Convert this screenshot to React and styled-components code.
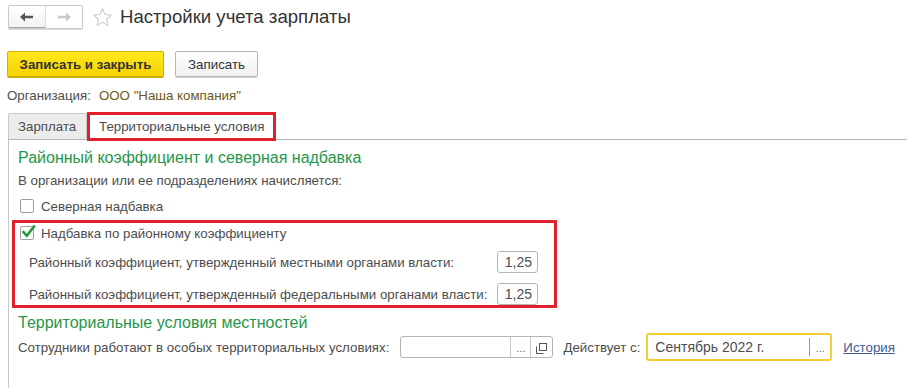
import React from 'react';
import styled, { createGlobalStyle } from 'styled-components';

const GlobalStyle = createGlobalStyle`
  html, body {
    margin: 0;
    padding: 0;
    background: #fff;
  }
  body {
    font-family: 'Liberation Sans', Arial, sans-serif;
    font-size: 13.3px;
    color: #4d4d4d;
  }
`;

const Page = styled.div`
  width: 907px;
  height: 388px;
  overflow: hidden;
`;

const Header = styled.div`
  display: flex;
  align-items: center;
  height: 24px;
  padding: 5px 0 0 8px;
`;

const NavGroup = styled.div`
  display: flex;
  height: 24px;
  border: 1px solid #c9c9c9;
  border-radius: 2px;
  box-sizing: border-box;
  box-shadow: 0 1px 0 #dcdcdc;
  background: #fff;
`;

const NavButton = styled.div`
  width: 36px;
  display: flex;
  align-items: center;
  justify-content: center;
  background: ${(p) => (p.$active ? 'linear-gradient(#fff, #f2f2f2)' : '#fff')};
  border-left: ${(p) => (p.$divider ? '1px solid #dedede' : 'none')};
  box-shadow: ${(p) => (p.$active ? 'inset 0 -1px 0 #a8a8a8' : 'none')};
`;

const Star = styled.svg`
  margin-left: 9px;
`;

const Title = styled.h1`
  margin: 0 0 0 7px;
  font-size: 18.6px;
  font-weight: normal;
  color: #333;
  line-height: 24px;
`;

const Toolbar = styled.div`
  display: flex;
  gap: 11px;
  padding: 22px 0 0 7px;
`;

const Button = styled.button`
  height: 26px;
  box-sizing: border-box;
  padding: 0;
  font-family: inherit;
  font-size: 13.3px;
  font-weight: ${(p) => (p.$primary ? 'bold' : 'normal')};
  color: #333;
  border-radius: 2px;
  border: 1px solid ${(p) => (p.$primary ? '#d1b000' : '#b8b8b8')};
  background: ${(p) =>
    p.$primary ? 'linear-gradient(#ffe81f, #f6d200)' : 'linear-gradient(#fff, #f1f1f1)'};
  box-shadow: 0 1px 0 ${(p) => (p.$primary ? '#c9a900' : '#cfcfcf')};
  width: ${(p) => p.$w}px;
`;

const OrgRow = styled.div`
  display: flex;
  gap: 8px;
  padding: 11px 0 0 7px;
  line-height: 16px;
`;

const OrgValue = styled.span`
  color: #6e5a16;
`;

const Tabs = styled.div`
  display: flex;
  margin: 9px 0 0 8px;
  height: 26px;
`;

const Tab = styled.div`
  position: relative;
  box-sizing: border-box;
  width: ${(p) => p.$w}px;
  padding-left: ${(p) => p.$pad}px;
  display: flex;
  align-items: center;
  background: ${(p) => (p.$active ? '#fff' : '#ececec')};
  border: 1px solid #c8c8c8;
  border-bottom: none;
  border-radius: 2px 2px 0 0;
  color: #4d4d4d;
`;

const Highlight = styled.div`
  position: absolute;
  border: 3px solid #e0202b;
  pointer-events: none;
  left: ${(p) => p.$l}px;
  top: ${(p) => p.$t}px;
  right: ${(p) => p.$r}px;
  bottom: ${(p) => p.$b}px;
`;

const Panel = styled.div`
  margin-left: 8px;
  border-top: 1px solid #b5b5b5;
  border-left: 1px solid #c8c8c8;
  padding: 8px 0 40px 9px;
`;

const GroupTitle = styled.div`
  color: #26964a;
  font-size: 16px;
  line-height: 20px;
  margin-top: ${(p) => p.$mt || 0}px;
`;

const Text = styled.div`
  line-height: 16px;
  margin-top: 5px;
`;

const CheckRow = styled.label`
  display: flex;
  align-items: center;
  gap: 7px;
  height: 18px;
  margin-top: ${(p) => p.$mt || 0}px;
  padding-left: 2px;
`;

const Box = styled.span`
  width: 14px;
  height: 14px;
  box-sizing: border-box;
  border: 1px solid #9e9e9e;
  border-radius: 2px;
  background: #fff;
  position: relative;
  flex-shrink: 0;
`;

const Tick = styled.svg`
  position: absolute;
  left: 0px;
  top: -3px;
`;

const Framed = styled.div`
  position: relative;
  margin-top: 5px;
  width: 539px;
  box-sizing: border-box;
  padding: 4px 19px 3px 0;
`;

const FieldRow = styled.div`
  display: flex;
  align-items: center;
  justify-content: space-between;
  padding-left: 11px;
  height: 22px;
  margin-top: ${(p) => p.$mt || 0}px;
`;

const NumberField = styled.div`
  width: 41px;
  height: 22px;
  box-sizing: border-box;
  border: 1px solid #b5b5b5;
  border-radius: 3px;
  display: flex;
  align-items: center;
  justify-content: flex-end;
  padding-right: 5px;
  color: #4d4d4d;
  font-size: 14px;
`;

const BottomRow = styled.div`
  display: flex;
  align-items: center;
  height: 28px;
  margin-top: 0;
`;

const Label = styled.span`
  margin-left: ${(p) => p.$ml || 0}px;
  margin-right: ${(p) => p.$mr}px;
  white-space: nowrap;
`;

const Input = styled.div`
  display: flex;
  flex-shrink: 0;
  box-sizing: border-box;
  width: ${(p) => p.$w}px;
  height: ${(p) => (p.$focus ? 28 : 22)}px;
  border: ${(p) => (p.$focus ? '2px solid #f3cd36' : '1px solid #b5b5b5')};
  border-radius: 3px;
  background: #fff;
`;

const InputText = styled.div`
  flex: 1;
  display: flex;
  align-items: center;
  padding-left: 7px;
  color: #4d4d4d;
  font-size: 14px;
`;

const InputBtn = styled.div`
  width: ${(p) => p.$w}px;
  display: flex;
  align-items: center;
  justify-content: center;
  border-left: 1px solid ${(p) => (p.$dark ? '#999' : '#c8c8c8')};
  color: #666;
  font-size: 11px;
  margin: ${(p) => (p.$dark ? '3px 0' : '0')};
  padding-top: 2px;
  box-sizing: border-box;
`;

const Link = styled.a`
  margin-left: 11px;
  color: #3b5998;
  text-decoration: underline;
  cursor: pointer;
`;

const Check = ({ checked, children, mt }) => (
  <CheckRow $mt={mt}>
    <Box>
      {checked && (
        <Tick width="15" height="15" viewBox="0 0 15 15">
          <path d="M2.5 8.2 L5.8 11.8 L13 2.5" fill="none" stroke="#1f9a3d" strokeWidth="2.6" strokeLinecap="square" />
        </Tick>
      )}
    </Box>
    {children}
  </CheckRow>
);

export default function App() {
  return (
    <Page>
      <GlobalStyle />
      <Header>
        <NavGroup>
          <NavButton $active>
            <svg width="14" height="10" viewBox="0 0 14 10">
              <path d="M0 5 L5 0.5 L5 3.8 L13 3.8 L13 6.2 L5 6.2 L5 9.5 Z" fill="#555" />
            </svg>
          </NavButton>
          <NavButton $divider>
            <svg width="14" height="10" viewBox="0 0 14 10">
              <path d="M14 5 L9 0.5 L9 3.8 L1 3.8 L1 6.2 L9 6.2 L9 9.5 Z" fill="#c8c8c8" />
            </svg>
          </NavButton>
        </NavGroup>
        <Star width="21" height="21" viewBox="0 0 24 24">
          <path
            d="M12 2 L14.9 8.6 L22 9.3 L16.6 14 L18.2 21 L12 17.3 L5.8 21 L7.4 14 L2 9.3 L9.1 8.6 Z"
            fill="none"
            stroke="#cdcdcd"
            strokeWidth="1.3"
            strokeLinejoin="round"
          />
        </Star>
        <Title>Настройки учета зарплаты</Title>
      </Header>

      <Toolbar>
        <Button $primary $w={157}>Записать и закрыть</Button>
        <Button $w={83}>Записать</Button>
      </Toolbar>

      <OrgRow>
        <span>Организация:</span>
        <OrgValue>ООО "Наша компания"</OrgValue>
      </OrgRow>

      <Tabs>
        <Tab $w={79} $pad={9}>Зарплата</Tab>
        <Tab $active $w={189} $pad={11}>
          Территориальные условия
          <Highlight $l={-1} $t={-2} $r={-1} $b={-2} />
        </Tab>
      </Tabs>

      <Panel>
        <GroupTitle>Районный коэффициент и северная надбавка</GroupTitle>
        <Text>В организации или ее подразделениях начисляется:</Text>
        <Check mt={8}>Северная надбавка</Check>

        <Framed>
          <Highlight $l={-6} $t={0} $r={0} $b={0} />
          <Check checked>Надбавка по районному коэффициенту</Check>
          <FieldRow $mt={9}>
            <span>Районный коэффициент, утвержденный местными органами власти:</span>
            <NumberField>1,25</NumberField>
          </FieldRow>
          <FieldRow $mt={10}>
            <span>Районный коэффициент, утвержденный федеральными органами власти:</span>
            <NumberField>1,25</NumberField>
          </FieldRow>
        </Framed>

        <GroupTitle $mt={5}>Территориальные условия местностей</GroupTitle>
        <BottomRow>
          <Label $mr={11}>Сотрудники работают в особых территориальных условиях:</Label>
          <Input $w={153}>
            <InputText />
            <InputBtn $w={20}>...</InputBtn>
            <InputBtn $w={22}>
              <svg width="11" height="11" viewBox="0 0 11 11">
                <rect x="3.5" y="0.5" width="7" height="7" fill="none" stroke="#555" />
                <path d="M0.5 3.5 V10.5 H7.5" fill="none" stroke="#555" />
              </svg>
            </InputBtn>
          </Input>
          <Label $ml={10} $mr={6}>Действует с:</Label>
          <Input $w={186} $focus>
            <InputText>Сентябрь 2022 г.</InputText>
            <InputBtn $w={21} $dark>...</InputBtn>
          </Input>
          <Link>История</Link>
        </BottomRow>
      </Panel>
    </Page>
  );
}
